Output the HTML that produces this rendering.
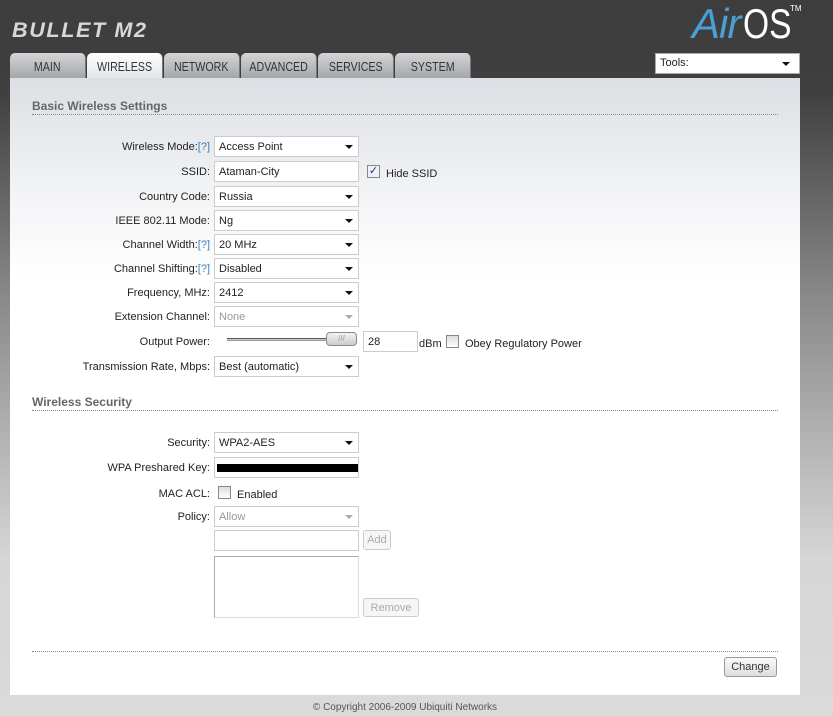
<!DOCTYPE html>
<html><head><meta charset="utf-8"><style>
*{margin:0;padding:0;box-sizing:border-box}
body{width:833px;height:716px;overflow:hidden;position:relative;font-family:"Liberation Sans",Arial,sans-serif;font-size:11px;color:#222;
background:linear-gradient(#3d3d3d 0,#3f3f3f 90px,#8a8a8a 300px,#d6d6d6 560px,#dadada 716px)}
.a{position:absolute}
.logo{left:12px;top:18px;font:italic bold 27px "Liberation Sans",sans-serif;letter-spacing:2px;color:#d8d8d8;transform:scale(.8,.8);transform-origin:left top}
.air{left:692px;top:0px;font:italic 42px "Liberation Sans",sans-serif;color:#4a9fd4;letter-spacing:-1px}
.os{left:743px;top:0px;font:42px "Liberation Sans",sans-serif;color:#fff;transform:scaleX(.8);transform-origin:left top}
.tm{left:790px;top:4px;color:#fff;font-size:8px}
.tools{left:655px;top:53px;width:145px;height:21px;background:#fff;border:1px solid #aaa;padding:3px 4px;font-size:11px}
.tab{top:53px;height:25px;width:76px;border-radius:5px 5px 0 0;background:linear-gradient(#d4d5d7,#a4a6aa);text-align:center;line-height:27px;font-size:13px;color:#333;border-right:1px solid #777}
.tab span{display:inline-block;transform:scaleX(.82)}
.tab.on{background:linear-gradient(#fff,#e2e5e9);height:26px}
.panel{left:10px;top:78px;width:790px;height:617px;background:linear-gradient(#dcdfe3 0,#f3f4f6 120px,#fff 200px,#fff)}
.h{left:32px;font-weight:bold;font-size:12px;color:#666;width:746px;border-bottom:1px dotted #888;padding-bottom:1px;padding-top:1px}
.l{right:623px;text-align:right;white-space:nowrap;margin-top:1px}
.q{color:#3a7fc0}
.in{left:214px;width:145px;height:21px;background:#fff;border:1px solid #ccc;padding:4px 4px 2px;white-space:nowrap;overflow:hidden}
.sel::after{content:"";position:absolute;right:5px;top:8px;border:4px solid transparent;border-top:4px solid #111;border-bottom:0}
.dis{color:#999}.dis::after{border-top-color:#aaa}
.cb{width:13px;height:13px;border:1px solid #888;background:linear-gradient(#ddd,#fff)}
.btn{border:1px solid #999;border-radius:3px;background:linear-gradient(#fafafa,#ddd);text-align:center;line-height:18px}
.bd{color:#aaa;border-color:#ccc;background:#f6f6f6}
</style></head><body>
<div class="a logo">BULLET M2</div>
<div class="a air">Air</div><div class="a os">OS</div><div class="a tm">TM</div>
<div class="a tools">Tools:</div>
<div class="a" style="left:782px;top:62px;border:4px solid transparent;border-top:4px solid #111;border-bottom:0"></div>
<div class="a tab" style="left:10px"><span>MAIN</span></div>
<div class="a tab on" style="left:87px"><span>WIRELESS</span></div>
<div class="a tab" style="left:164px"><span>NETWORK</span></div>
<div class="a tab" style="left:241px"><span>ADVANCED</span></div>
<div class="a tab" style="left:318px"><span>SERVICES</span></div>
<div class="a tab" style="left:395px"><span>SYSTEM</span></div>
<div class="a panel"></div>
<div class="a h" style="top:98px">Basic Wireless Settings</div>

<div class="a l" style="top:140px">Wireless Mode:<span class="q">[?]</span></div><div class="a in sel" style="top:136px">Access Point</div>
<div class="a l" style="top:165px">SSID:</div><div class="a in" style="top:161px">Ataman-City</div>
<div class="a cb" style="left:367px;top:165px;background:#eef;font-size:11px;line-height:11px;text-align:center;color:#235">✓</div><div class="a" style="left:386px;top:168px">Hide SSID</div>
<div class="a l" style="top:190px">Country Code:</div><div class="a in sel" style="top:186px">Russia</div>
<div class="a l" style="top:214px">IEEE 802.11 Mode:</div><div class="a in sel" style="top:210px">Ng</div>
<div class="a l" style="top:238px">Channel Width:<span class="q">[?]</span></div><div class="a in sel" style="top:234px">20 MHz</div>
<div class="a l" style="top:262px">Channel Shifting:<span class="q">[?]</span></div><div class="a in sel" style="top:258px">Disabled</div>
<div class="a l" style="top:286px">Frequency, MHz:</div><div class="a in sel" style="top:282px">2412</div>
<div class="a l" style="top:310px">Extension Channel:</div><div class="a in sel dis" style="top:306px">None</div>
<div class="a l" style="top:335px">Output Power:</div>
<div class="a" style="left:227px;top:338px;width:100px;height:3px;border-top:1px solid #555;border-bottom:1px solid #999;background:#ccc"></div>
<div class="a" style="left:326px;top:332px;width:31px;height:14px;border:1px solid #888;border-radius:4px;background:linear-gradient(#f3f3f3,#ccc);font-size:8px;color:#999;text-align:center;line-height:12px">///</div>
<div class="a in" style="left:363px;top:331px;width:55px">28</div>
<div class="a" style="left:419px;top:338px">dBm</div>
<div class="a cb" style="left:446px;top:335px"></div><div class="a" style="left:465px;top:338px">Obey Regulatory Power</div>
<div class="a l" style="top:360px">Transmission Rate, Mbps:</div><div class="a in sel" style="top:356px">Best (automatic)</div>

<div class="a h" style="top:394px">Wireless Security</div>
<div class="a l" style="top:436px">Security:</div><div class="a in sel" style="top:432px">WPA2-AES</div>
<div class="a l" style="top:461px">WPA Preshared Key:</div><div class="a in" style="top:457px"><div style="background:#000;height:8px;margin-top:2px;width:142px;margin-left:-2px"></div></div>
<div class="a l" style="top:487px">MAC ACL:</div>
<div class="a cb" style="left:218px;top:486px"></div><div class="a" style="left:237px;top:489px">Enabled</div>
<div class="a l" style="top:510px">Policy:</div><div class="a in sel dis" style="top:506px">Allow</div>
<div class="a in" style="top:530px"></div>
<div class="a btn bd" style="left:363px;top:530px;width:28px;height:20px">Add</div>
<div class="a in" style="top:556px;height:62px;border-color:#aaa #ddd #ddd #aaa"></div>
<div class="a btn bd" style="left:363px;top:598px;width:56px;height:19px">Remove</div>
<div class="a" style="left:32px;top:651px;width:746px;border-top:1px dotted #888"></div>
<div class="a btn" style="left:724px;top:657px;width:53px;height:20px;color:#333">Change</div>
<div class="a" style="left:0;top:702px;width:810px;text-align:center;font-size:10px;color:#555">© Copyright 2006-2009 Ubiquiti Networks</div>
</body></html>
